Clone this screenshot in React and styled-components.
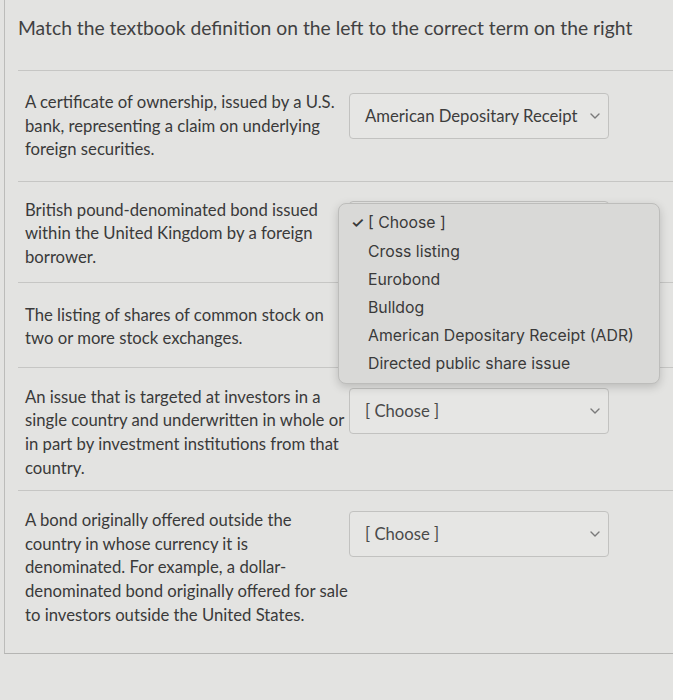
import React from "react";
import styled, { createGlobalStyle } from "styled-components";

const GlobalStyle = createGlobalStyle`
  html, body {
    margin: 0;
    padding: 0;
    background: #e3e3e1;
    overflow: hidden;
  }
  body {
    font-family: Lato, "Open Sans", sans-serif;
    color: #3a3a3a;
  }
`;

const Page = styled.div`
  width: 673px;
  height: 700px;
  background: #e3e3e1;
  overflow: hidden;
`;

const Panel = styled.div`
  margin-left: 4px;
  width: 720px;
  border-left: 1px solid #bcbcba;
  border-bottom: 1px solid #b5b5b3;
`;

const Header = styled.h1`
  margin: 0;
  height: 70px;
  box-sizing: border-box;
  padding: 16px 0 0 13px;
  font-size: 19.3px;
  line-height: 24px;
  font-weight: 400;
  color: #414141;
`;

const Rows = styled.div`
  margin-left: 13px;
`;

const Row = styled.div`
  display: grid;
  grid-template-columns: 318px 260px;
  column-gap: 6px;
  align-items: start;
  padding: ${(p) => p.$top}px 0 ${(p) => p.$bottom}px 7px;
  border-top: 1px solid #c6c6c4;
`;

const Definition = styled.p`
  margin: 0;
  font-size: 16.7px;
  line-height: 23.6px;
  color: #3a3a3a;
  white-space: nowrap;
`;

const SelectWrap = styled.div`
  position: relative;
  margin-top: 2px;
`;

const SelectBox = styled.div`
  height: 46px;
  box-sizing: border-box;
  border: 1px solid #c2c2c0;
  border-radius: 4px;
  background: #e6e6e4;
  display: flex;
  align-items: center;
  justify-content: space-between;
  padding: 0 8px 0 15px;
  font-size: 16.7px;
  color: ${(p) => (p.$placeholder ? "#4a4a4a" : "#3d3d3d")};
`;

const Value = styled.span`
  visibility: ${(p) => (p.$hidden ? "hidden" : "visible")};
`;

const Chevron = () => (
  <svg width="10" height="6" viewBox="0 0 10 6" fill="none">
    <path d="M1 1l4 4 4-4" stroke="#7a7a7a" strokeWidth="1.4" strokeLinecap="round" strokeLinejoin="round" />
  </svg>
);

const Menu = styled.ul`
  position: absolute;
  left: -11px;
  top: 2px;
  width: 322px;
  margin: 0;
  padding: 5px 0 5px;
  list-style: none;
  box-sizing: border-box;
  background: #d9d9d7;
  border: 1px solid #bdbdbb;
  border-radius: 8px;
  box-shadow: 0 3px 10px rgba(0, 0, 0, 0.18);
  font-family: Inter, "Noto Sans", sans-serif;
  font-size: 15.8px;
  color: #3a3a3a;
  z-index: 2;
`;

const MenuItem = styled.li`
  display: flex;
  align-items: center;
  height: 28.2px;
  padding-left: 12px;
`;

const Check = styled.span`
  width: 17px;
  font-size: 15px;
  font-weight: 600;
  color: #3a3a3a;
`;

const options = [
  "[ Choose ]",
  "Cross listing",
  "Eurobond",
  "Bulldog",
  "American Depositary Receipt (ADR)",
  "Directed public share issue",
];

function Select({ value, open }) {
  const placeholder = value === "[ Choose ]";
  return (
    <SelectWrap>
      <SelectBox $placeholder={placeholder}>
        <Value $hidden={open}>{value}</Value>
        <Chevron />
      </SelectBox>
      {open && (
        <Menu>
          {options.map((o, i) => (
            <MenuItem key={o}>
              <Check>{i === 0 ? "✓" : ""}</Check>
              {o}
            </MenuItem>
          ))}
        </Menu>
      )}
    </SelectWrap>
  );
}

const items = [
  {
    text: ["A certificate of ownership, issued by a U.S.", "bank, representing a claim on underlying", "foreign securities."],
    value: "American Depositary Receipt",
    top: 20,
    bottom: 19,
  },
  {
    text: ["British pound-denominated bond issued", "within the United Kingdom by a foreign", "borrower."],
    value: "[ Choose ]",
    open: true,
    top: 17,
    bottom: 12,
  },
  {
    text: ["The listing of shares of common stock on", "two or more stock exchanges."],
    value: null,
    top: 21,
    bottom: 16,
  },
  {
    text: ["An issue that is targeted at investors in a", "single country and underwritten in whole or", "in part by investment institutions from that", "country."],
    value: "[ Choose ]",
    top: 18,
    bottom: 10,
  },
  {
    text: [
      "A bond originally offered outside the",
      "country in whose currency it is",
      "denominated. For example, a dollar-",
      "denominated bond originally offered for sale",
      "to investors outside the United States.",
    ],
    value: "[ Choose ]",
    top: 18,
    bottom: 26,
  },
];

export default function App() {
  return (
    <Page>
      <GlobalStyle />
      <Panel>
        <Header>Match the textbook definition on the left to the correct term on the right</Header>
        <Rows>
          {items.map((it, i) => (
            <Row key={i} $top={it.top} $bottom={it.bottom}>
              <Definition>
                {it.text.map((l, j) => (
                  <React.Fragment key={j}>
                    {l}
                    {j < it.text.length - 1 && <br />}
                  </React.Fragment>
                ))}
              </Definition>
              {it.value ? <Select value={it.value} open={it.open} /> : <div />}
            </Row>
          ))}
        </Rows>
      </Panel>
    </Page>
  );
}
